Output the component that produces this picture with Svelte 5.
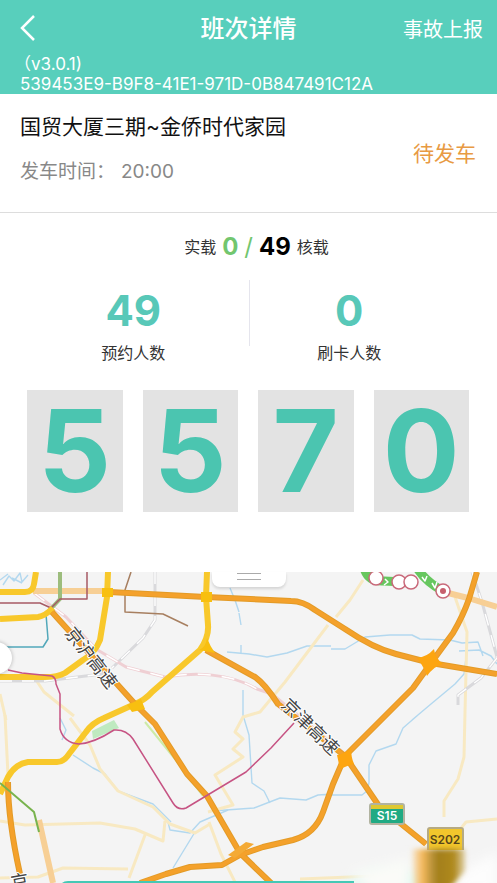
<script>
  const trip = {
    route: '国贸大厦三期~金侨时代家园',
    time: '20:00',
    status: '待发车',
    loaded: 0,
    capacity: 49
  };
  const stats = [
    { value: 49, label: '预约人数' },
    { value: 0, label: '刷卡人数' }
  ];
  const code = ['5', '5', '7', '0'];
  const stops = [[376, 578], [399, 582], [411, 582], [443, 591]];
</script>

<div class="page">
  <header>
    <div class="bar">
      <button class="back" aria-label="返回">
        <svg width="16" height="28" viewBox="0 0 16 28"><path d="M14 2 2 14 14 26" /></svg>
      </button>
      <h1>班次详情</h1>
      <button class="report">事故上报</button>
    </div>
    <div class="version">
      <p class="number">（v3.0.1)</p>
      <p>539453E9-B9F8-41E1-971D-0B847491C12A</p>
    </div>
  </header>

  <section class="trip">
    <div>
      <h2>{trip.route}</h2>
      <p class="departure"><span>发车时间：</span><time>{trip.time}</time></p>
    </div>
    <strong class="status">{trip.status}</strong>
  </section>

  <section class="load">
    <span>实载</span>
    <b class="now">{trip.loaded}</b>
    <i>/</i>
    <b>{trip.capacity}</b>
    <span>核载</span>
  </section>

  <section class="stats">
    {#each stats as stat}
      <div class="stat">
        <b>{stat.value}</b>
        <span>{stat.label}</span>
      </div>
    {/each}
  </section>

  <section class="code">
    {#each code as digit}
      <span>{digit}</span>
    {/each}
  </section>

  <section class="map">
    <svg class="canvas" viewBox="0 572 497 311" fill="none" stroke-linejoin="round">
      <defs>
        <linearGradient id="brown" x1="0" x2="1" y1="0" y2="0">
          <stop offset="0" stop-color="#f8b95c" stop-opacity=".2" />
          <stop offset=".2" stop-color="#f5b85a" />
          <stop offset=".38" stop-color="#b8923a" />
          <stop offset=".5" stop-color="#a37f18" />
          <stop offset=".8" stop-color="#b08a20" />
          <stop offset="1" stop-color="#c7a955" stop-opacity=".5" />
        </linearGradient>
        <filter id="soft" x="-30%" y="-30%" width="160%" height="160%"><feGaussianBlur stdDeviation="2.5" /></filter>
        <filter id="haze" x="-30%" y="-60%" width="160%" height="220%"><feGaussianBlur stdDeviation="6" /></filter>
      </defs>
      <rect y="572" width="497" height="311" fill="#f4f4f4" />

      <g stroke="#b3d8ef" stroke-width="1.4">
        <path d="M3 585l6-9 5 5 6-8 2 9 6-7M0 580l8-6M12 578l10 5" />
        <path d="M230 588l5 12 4 12M239 613l2 12M241 645v8M227 652l22 2 18 3 20-4 20-7h24" />
        <path d="M331 649l14 0 20-12 25-2 22 0 8 4 30 1 12 3 16-1 5 14M459 651l20-1 12 6 6 8" />
        <path d="M467 650l-3 24-9 10-24 20-19 16M418 715l-15 13-7 16-20 7-7 14 0 18-2 8-5 4h-34M243 690l0 25 6 20 3 48 12 8 6 12M212 811l42-3 26-10 26 2 12-5 15-1" />
        <path d="M228 810l-28 12-10 11-20-3-2-8M195 832l-22 36M73 755l20 13 12 6 13 17 35 13 18 18M60 718l6 12-4 10" />
      </g>

      <g stroke="#f8e9c2" stroke-width="3">
        <path d="M5 715l3 60M36 680l8 12 30 24M70 718l20 27 10 24 18 22 35 16 17 17 25 9 15-9M0 821l25 4 75-2 35 6 28 12 2-20M145 835l-16 43M0 878l38-1 25-9 65 1M363 580l-13 20-14 17" />
        <path d="M328 625l-43 57-25 30-17 5-8 15 8 7-10 10 10 8-28 18 18 30-25 7M209 822l12 32 15 30M455 597l12 35-2 80-1 45-6 22-14 22v16M458 832l8-10 31-3M0 694l6 26M300 879l75-3" />
      </g>
      <path d="M92 731l22-11 5 8-26 11z" fill="#bfeac0" />
      <path d="M145 722l30 37 28 37" stroke="#cdeba6" stroke-width="2" />

      <g stroke="#d9d9dc" stroke-width="3">
        <path d="M155 572v48l-12 18-31 30M0 681h45l65-8M472 572l10 30 15 55M497 658l-16 20-23 17v10" />
        <path d="M155 572v48l-12 18-31 30M0 681h45l65-8M472 572l10 30 15 55M497 658l-16 20-23 17v10" stroke="#fff" stroke-width="1.4" stroke-dasharray="12 10" />
      </g>
      <g stroke="#efcfd3" stroke-width="3">
        <path d="M34 593l32 24 30 32 30 18 39 10c30-5 65-4 92 12l15 5 73 60 20 30" />
        <path d="M34 593l32 24 30 32 30 18 39 10c30-5 65-4 92 12l15 5 73 60 20 30" stroke="#fff" stroke-width="1.5" stroke-dasharray="13 11" />
      </g>

      <path d="M33 591h75M448 593l20 5 29 9M39 820l14 63" stroke="#f7cf95" stroke-width="6" />
      <path d="M60 572v27l-14 15" stroke="#9dbd7d" stroke-width="4" />
      <path d="M46 614l2 25-5 8H0" stroke="#52a8ba" stroke-width="1.5" />
      <path d="M87 572v27H60l-9 9-11-5H0" stroke="#a65a64" stroke-width="1.5" />
      <path d="M131 572l-6 18v22l38 2 25 12" stroke="#a77f60" stroke-width="1.5" />

      <g stroke="#f8c82b" stroke-width="6">
        <path d="M0 592h25q8 0 9-8l2-12M0 619l38-2q7-1 15-9M108 572l-1 25-7 43q-5 13-17 20l-18 13q-7 4-20 4H0M207 572l-1 25 2 28q1 12-8 25l-48 42q-7 8-17 12l-31 14q-12 5-18 14l-17 22q-5 8-12 8H28q-13 2-20 15L0 794" />
      </g>
      <g stroke="#e39b27" stroke-width="6">
        <path id="highways" d="M109 592l97 5 85 4q12 0 24 9l30 19q28 19 51 25l35 9 66 11M52 612l83 92 20 20 32 50 20 22 33 57 32 31M206 650l49 27q10 7 23 27l67 52 34 50 47 38M477 572l-8 27q-6 17-16 34l-22 30-18 25-68 68-12 28-10 28q-8 22-30 28l-30 7-23 8-18 10-32 2-24 7-26 9M8 782q0 38 12 92" />
        <use href="#highways" stroke="#f4a12b" stroke-width="4" />
      </g>
      <g fill="#fda510">
        <path d="M417 658q10-1 17-9 1 9 9 15-9 2-16 12-3-9-10-18zM337 755q7-1 14-7 0 9 3 16-8 2-14 5z" />
        <path d="M228 855l18-13 8 2-19 14z" fill="#f4aa35" />
      </g>
      <path d="M199 650q7-3 8-12 3 8 8 15zM127 705l14-6 4 10-13 3zM102 588h11v9h-11zM201 592h11v10h-11z" fill="#f8bf10" />
      <path d="M0 783l34 29 5 20" stroke="#78b34e" stroke-width="2" />
      <path d="M8 670l14 3 30 3q4 2 4 8l4 10v35q4 14 19 15 15-1 35-14 12-1 19 9l40 64q5 8 13 5l60-36 25-24 23-25" stroke="#c65383" stroke-width="1.5" />

      <path d="M364 568q4 14 20 13l20 1M417 568q9 14 26 23" stroke="#67c75f" stroke-width="9" />
      <path d="M385 579l3 3-4 3M422 577l3 4 2-5M432 583l3 5 2-6" stroke="#fff" stroke-width="1.5" />
      {#each stops as [x, y], i}
        <circle cx={x} cy={y} r="7" fill="#fff" stroke="#c9697a" stroke-width="1.5" />
        {#if i === stops.length - 1}<circle cx={x} cy={y} r="3" fill="#c65f6d" />{/if}
      {/each}

      <g class="road-name">
        <text transform="translate(91 658) rotate(52)" y="6">京沪高速</text>
        <text transform="translate(310 727) rotate(44)" y="6">京津高速</text>
        <text transform="translate(20 883) rotate(-10)" y="5">京</text>
      </g>

      <path d="M330 892l40-20 40-2 15 20z" fill="#d9f8ef" filter="url(#haze)" />
      <path d="M460 872l37-20v40h-48z" fill="#fdfdfd" filter="url(#haze)" />
      <path d="M350 872l60-14v34h-40z" fill="#fbfbf8" filter="url(#haze)" />
      <g class="shield">
        <rect x="370" y="804" width="34" height="20" rx="2" fill="#20aa83" stroke="#b1b3a0" stroke-width="2" />
        <path d="M371 807h32" stroke="#dec832" stroke-width="4" />
        <text x="387" y="820" fill="#fff">S15</text>
        <path d="M428 850v-20q0-2 2-2h31q2 0 2 2v20" fill="#f2c62c" stroke="#b6aa82" stroke-width="2" />
        <path d="M412 849h53v22l-16 18h-35z" fill="url(#brown)" filter="url(#soft)" />
        <text x="445" y="844" fill="#57461a">S202</text>
      </g>
      <path d="M62 883q2-2 6-2h286v2z" fill="#45c8b5" />
    </svg>
    <button class="handle" aria-label="展开地图"><i></i><i></i></button>
    <button class="locate" aria-label="定位"></button>
  </section>
</div>

<style>
  :global(body) {
    margin: 0;
    background: #fff;
  }
  .page {
    font-family: Inter, 'Noto Sans CJK SC', sans-serif;
    color: #333;
    overflow: hidden;
  }
  h1, h2, p {
    margin: 0;
    font-weight: 400;
  }
  button {
    border: 0;
    padding: 0;
    background: none;
    font: inherit;
    color: inherit;
  }
  header {
    background: #58cfbc;
    color: #fff;
    padding-bottom: 1px;
  }
  .bar {
    display: grid;
    grid-template-columns: 1fr auto 1fr;
    align-items: center;
    height: 56px;
    padding: 0 14px;
  }
  .back {
    display: flex;
    justify-self: start;
    padding-left: 6px;
  }
  .back path {
    fill: none;
    stroke: #fff;
    stroke-width: 2.5;
  }
  h1 {
    font-size: 24px;
    line-height: 32px;
    font-weight: 500;
    padding-top: 2px;
  }
  .report {
    justify-self: end;
    font-size: 20px;
  }
  .version {
    padding: 0 20px;
    font-size: 17px;
    line-height: 20px;
  }
  .version p {
    height: 20px;
    line-height: 22px;
    white-space: nowrap;
  }
  .version .number {
    height: 17px;
    line-height: 16px;
    margin-left: -6px;
  }
  .trip {
    display: flex;
    justify-content: space-between;
    align-items: center;
    padding: 16px 21px 10px 20px;
    border-bottom: 1px solid #ddd;
  }
  h2 {
    font-size: 21px;
    line-height: 34px;
    color: #111;
  }
  .departure {
    display: flex;
    gap: 6px;
    margin-top: 12px;
    margin-bottom: 16px;
    font-size: 19px;
    line-height: 32px;
    height: 30px;
    color: #888;
  }
  .status {
    font-size: 21px;
    line-height: 30px;
    font-weight: 400;
    color: #e89a43;
    padding-bottom: 4px;
  }
  .load {
    display: flex;
    justify-content: center;
    align-items: center;
    gap: 6px;
    padding: 16px 0 0 16px;
    font-size: 16px;
    line-height: 36px;
  }
  .load b, .load i {
    font-size: 24px;
    color: #000;
  }
  .load .now, .load i {
    color: #72c66f;
  }
  .load i {
    font-style: normal;
  }
  .stats {
    display: grid;
    grid-template-columns: 23fr 20fr;
    margin: 15px 0 44px;
    padding: 0 48px 0 18px;
  }
  .stat {
    display: flex;
    flex-direction: column;
    align-items: center;
    height: 66px;
  }
  .stat + .stat {
    border-left: 1px solid #e5e5ed;
  }
  .stat b {
    font-size: 42px;
    line-height: 62px;
    color: #58c8b8;
  }
  .stat span {
    font-size: 16px;
    line-height: 22px;
  }
  .code {
    display: grid;
    grid-template-columns: repeat(4, 1fr);
    gap: 20px;
    padding: 0 28px 60px 27px;
  }
  .code span {
    background: #e3e3e3;
    color: #4bc5b0;
    text-align: center;
    font-size: 114px;
    line-height: 122px;
    font-weight: 700;
  }
  .map {
    position: relative;
  }
  .canvas {
    display: block;
    width: 100%;
  }
  .road-name text {
    font-size: 18px;
    text-anchor: middle;
    fill: #444;
    stroke: #fff;
    stroke-width: 2;
    paint-order: stroke;
  }
  .shield text {
    font-size: 12px;
    font-weight: 600;
    text-anchor: middle;
  }
  .handle {
    position: absolute;
    top: 0;
    left: 50%;
    transform: translateX(-50%);
    display: flex;
    flex-direction: column;
    align-items: center;
    gap: 5px;
    width: 74px;
    height: 15px;
    border-radius: 0 0 8px 8px;
    background: #fff;
    box-shadow: 0 2px 3px #0002;
  }
  .handle i {
    width: 24px;
    height: 1px;
    background: #aaa;
  }
  .handle i:first-child {
    margin-top: 1px;
  }
  .locate {
    position: absolute;
    top: 70px;
    left: -20px;
    width: 32px;
    height: 32px;
    border-radius: 50%;
    background: #fff;
    box-shadow: 0 0 4px #0004;
  }
</style>
